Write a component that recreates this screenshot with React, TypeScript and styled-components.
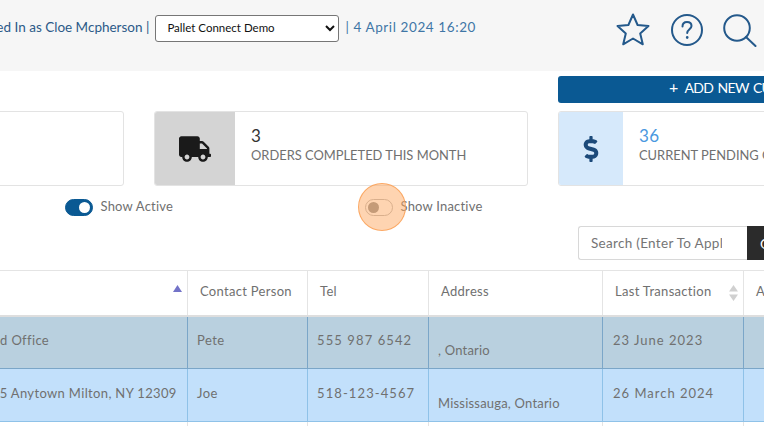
import React from "react";
import styled, { createGlobalStyle } from "styled-components";
import { FaTruck, FaDollarSign } from "react-icons/fa";

const Global = createGlobalStyle`
  html, body { margin: 0; padding: 0; background: #fff; }
  body { font-family: "Lato", "Noto Sans", sans-serif; }
`;

const Page = styled.div`
  position: relative;
  width: 764px;
  height: 426px;
  overflow: hidden;
  background: #fff;
`;

const TopBar = styled.header`
  height: 71px;
  background: #f6f6f6;
  display: flex;
  align-items: flex-start;
  margin-left: -100px;
  white-space: nowrap;
`;

const UserLine = styled.div`
  display: flex;
  align-items: center;
  height: 26px;
  margin-top: 15px;
  width: 716px;
  justify-content: flex-end;
  padding-right: 140px;
  box-sizing: border-box;
  gap: 6px;
  color: #2c5a88;
  font-size: 13.5px;
`;

const UserName = styled.span`
  padding-bottom: 2px;
`;

const Site = styled.select`
  width: 184px;
  height: 27px;
  box-sizing: border-box;
  font-family: "Lato", sans-serif;
  font-size: 11.5px;
  color: #111;
  background: #fff;
  border: 1px solid #767676;
  border-radius: 3px;
  padding: 0 0 2px 7px;
`;

const DateText = styled.span`
  color: #3f76a6;
  letter-spacing: 0.6px;
  padding-bottom: 2px;
`;

const IconSet = styled.div`
  display: flex;
  align-items: flex-start;
  color: #24598b;
`;

const IconSlot = styled.span<{ $w: number; $top: number }>`
  display: block;
  width: ${(p) => p.$w}px;
  margin-top: ${(p) => p.$top}px;
  line-height: 0;
`;

const ActionRow = styled.div`
  display: flex;
  height: 40px;
  padding: 5px 0 0 558px;
  box-sizing: border-box;
`;

const AddButton = styled.button`
  width: 400px;
  flex: none;
  height: 27px;
  padding: 0 0 4px 111px;
  border: 0;
  border-radius: 3px;
  background: #0a5993;
  color: #fff;
  font-family: "Lato", sans-serif;
  font-size: 14px;
  letter-spacing: -0.7px;
  word-spacing: 1.5px;
  text-align: left;
  white-space: nowrap;
`;

const PlusMark = styled.span`
  font-size: 16px;
  line-height: 1;
  margin-right: 3px;
`;

const Cards = styled.section`
  display: flex;
  gap: 30px;
  margin-left: -250px;
  height: 75px;
`;

const Card = styled.article`
  width: 374px;
  flex: none;
  height: 75px;
  box-sizing: border-box;
  display: flex;
  background: #fff;
  border: 1px solid #e3e3e3;
  border-radius: 3px;
  overflow: hidden;
`;

const CardIcon = styled.div<{ $bg: string; $color: string; $w: number }>`
  width: ${(p) => p.$w}px;
  flex: none;
  background: ${(p) => p.$bg};
  color: ${(p) => p.$color};
  display: flex;
  align-items: center;
  justify-content: center;
`;

const CardBody = styled.div`
  padding: 14px 0 0 16px;
  white-space: nowrap;
`;

const CardNumber = styled.div<{ $color: string }>`
  color: ${(p) => p.$color};
  font-size: 17px;
  line-height: 20px;
  letter-spacing: 0.5px;
`;

const CardLabel = styled.div`
  color: #707070;
  font-size: 12.9px;
  line-height: 19px;
`;

const ToggleRow = styled.div`
  display: flex;
  height: 40px;
  align-items: flex-start;
  padding: 13px 0 0 65px;
  box-sizing: border-box;
`;

const ToggleItem = styled.label<{ $w: number }>`
  display: flex;
  align-items: center;
  width: ${(p) => p.$w}px;
  height: 17px;
  gap: 7.5px;
  color: #707070;
  font-size: 13px;
  letter-spacing: 0.2px;
  flex: none;
`;

const ToggleText = styled.span`
  padding-bottom: 3px;
`;

const Track = styled.span<{ $on?: boolean }>`
  position: relative;
  display: block;
  width: 28px;
  height: 17px;
  box-sizing: border-box;
  flex: none;
  border-radius: 9px;
  background: ${(p) => (p.$on ? "#0a5993" : "#fff")};
  border: 1px solid ${(p) => (p.$on ? "#0a5993" : "#b5b5b5")};
`;

const Knob = styled.span<{ $on?: boolean }>`
  position: absolute;
  top: 2px;
  left: ${(p) => (p.$on ? "13px" : "2px")};
  width: 11px;
  height: 11px;
  border-radius: 50%;
  background: ${(p) => (p.$on ? "#fff" : "#8c8c8c")};
`;

const Highlight = styled.span`
  position: absolute;
  left: 358px;
  top: 183px;
  width: 48px;
  height: 48px;
  box-sizing: border-box;
  border-radius: 50%;
  border: 1.5px solid rgba(250, 160, 85, 0.85);
  background: rgba(253, 170, 100, 0.5);
`;

const SearchRow = styled.div`
  display: flex;
  height: 44px;
  padding: 0 0 0 578px;
  box-sizing: border-box;
`;

const SearchInput = styled.input`
  width: 169px;
  height: 34px;
  flex: none;
  box-sizing: border-box;
  padding: 0 25px 0 12px;
  border: 1px solid #d8d8d8;
  border-right: 0;
  border-radius: 3px 0 0 3px;
  font-family: "Lato", sans-serif;
  font-size: 13.5px;
  letter-spacing: 0.3px;
  outline: none;
  &::placeholder { color: #757575; opacity: 1; }
`;

const GoButton = styled.button`
  width: 60px;
  height: 34px;
  flex: none;
  border: 0;
  padding: 0 0 0 13px;
  background: #2b2b2b;
  color: #fff;
  font-family: "Lato", sans-serif;
  font-size: 14px;
  text-align: left;
`;

const Table = styled.table`
  border-collapse: collapse;
  table-layout: fixed;
  width: 822px;
  margin-left: -35px;
  font-size: 13px;
  color: #707070;
`;

const Head = styled.th<{ $w: number }>`
  position: relative;
  width: ${(p) => p.$w}px;
  height: 45px;
  box-sizing: border-box;
  padding: 0 12px 4px;
  text-align: left;
  font-weight: 400;
  background: #fff;
  border: 1px solid #e4e4e4;
  border-bottom: 2px solid #dedede;
  letter-spacing: 0.3px;
  color: #707070;
`;

const SortIcon = styled.svg`
  position: absolute;
  right: 5px;
  top: 14px;
`;

const Row = styled.tr<{ $bg: string; $line: string }>`
  background: ${(p) => p.$bg};
  td { border: 1px solid ${(p) => p.$line}; }
`;

const Cell = styled.td`
  height: 53px;
  box-sizing: border-box;
  padding: 0 9px 5px;
  white-space: nowrap;
  overflow: hidden;
  color: #707070;
  letter-spacing: 0.45px;
`;

const NameCell = styled(Cell)`
  padding-left: 10px;
  padding-right: 0;
  letter-spacing: 0.35px;
`;

const TelCell = styled(Cell)`
  letter-spacing: 1.1px;
`;

const DateCell = styled(Cell)`
  padding-left: 10px;
  letter-spacing: 1px;
`;

const AddressCell = styled(Cell)`
  vertical-align: bottom;
  padding-bottom: 10px;
  letter-spacing: 0.2px;
`;

const columns = [
  { label: "", w: 222, sort: "up" },
  { label: "Contact Person", w: 120 },
  { label: "Tel", w: 121 },
  { label: "Address", w: 174 },
  { label: "Last Transaction", w: 141, sort: "both" },
  { label: "Active", w: 44 },
];

const rows = [
  { name: "Head Office", contact: "Pete", tel: "555 987 6542", address: ", Ontario", date: "23 June 2023", bg: "#b9d0df", line: "#7ba6c8" },
  { name: "1235 Anytown Milton, NY 12309", contact: "Joe", tel: "518-123-4567", address: "Mississauga, Ontario", date: "26 March 2024", bg: "#c2e0fb", line: "#8fc2e8" },
  { name: "", contact: "", tel: "", address: "", date: "", bg: "#fff", line: "#e4e4e4" },
];

export default function App() {
  return (
    <Page>
      <Global />
      <TopBar>
        <UserLine>
          <UserName>Logged In as Cloe Mcpherson |</UserName>
          <Site defaultValue="demo" aria-label="Company">
            <option value="demo">Pallet Connect Demo</option>
          </Site>
          <DateText>| 4 April 2024 16:20</DateText>
        </UserLine>
        <IconSet>
          <IconSlot $w={55} $top={13}>
            <svg width="34" height="33" viewBox="0 0 34 33" fill="none" stroke="currentColor" strokeWidth="2" strokeLinejoin="round">
              <path d="M17 1.5 L21.6 12 L32.5 13 L24.2 20.4 L26.8 31.3 L17 25.5 L7.2 31.3 L9.8 20.4 L1.5 13 L12.4 12 Z" />
            </svg>
          </IconSlot>
          <IconSlot $w={52} $top={14}>
            <svg width="32" height="32" viewBox="0 0 32 32" fill="none" stroke="currentColor" strokeWidth="2" strokeLinecap="round">
              <circle cx="16" cy="16" r="15" />
              <path d="M11.5 12.5 C11.5 9.5 13.5 8 16 8 C18.7 8 20.5 9.7 20.5 12 C20.5 15 16.2 15.5 16.2 19" />
              <path d="M16.2 23.2 V23.6" strokeWidth="2.6" />
            </svg>
          </IconSlot>
          <IconSlot $w={36} $top={14}>
            <svg width="34" height="33" viewBox="0 0 34 33" fill="none" stroke="currentColor" strokeWidth="2" strokeLinecap="round">
              <circle cx="14" cy="14" r="12.8" />
              <path d="M23 23 L32.5 32" />
            </svg>
          </IconSlot>
        </IconSet>
      </TopBar>
      <ActionRow>
        <AddButton><PlusMark>+</PlusMark> ADD NEW CUSTOMER</AddButton>
      </ActionRow>
      <Cards>
        <Card />
        <Card>
          <CardIcon $bg="#d4d4d4" $color="#1a1a1a" $w={80}>
            <FaTruck size={32} />
          </CardIcon>
          <CardBody>
            <CardNumber $color="#333">3</CardNumber>
            <CardLabel>ORDERS COMPLETED THIS MONTH</CardLabel>
          </CardBody>
        </Card>
        <Card>
          <CardIcon $bg="#d6e9fb" $color="#1c4a7a" $w={64}>
            <FaDollarSign size={26} />
          </CardIcon>
          <CardBody>
            <CardNumber $color="#4a98e0">36</CardNumber>
            <CardLabel>CURRENT PENDING ORDERS</CardLabel>
          </CardBody>
        </Card>
      </Cards>
      <ToggleRow>
        <ToggleItem $w={300}>
          <Track $on><Knob $on /></Track>
          <ToggleText>Show Active</ToggleText>
        </ToggleItem>
        <ToggleItem $w={140}>
          <Track><Knob /></Track>
          <ToggleText>Show Inactive</ToggleText>
        </ToggleItem>
      </ToggleRow>
      <Highlight />
      <SearchRow>
        <SearchInput placeholder="Search (Enter To Apply)" />
        <GoButton>Go</GoButton>
      </SearchRow>
      <Table>
        <thead>
          <tr>
            {columns.map((c) => (
              <Head key={c.label || "name"} $w={c.w}>
                {c.label}
                {c.sort === "up" && (
                  <SortIcon width="9" height="8" viewBox="0 0 9 8">
                    <path d="M4.5 0 L9 7 H0 Z" fill="#7373c8" />
                  </SortIcon>
                )}
                {c.sort === "both" && (
                  <SortIcon width="9" height="16" viewBox="0 0 9 16">
                    <path d="M4.5 0 L9 6.5 H0 Z M0 9.5 H9 L4.5 16 Z" fill="#d0d0d0" />
                  </SortIcon>
                )}
              </Head>
            ))}
          </tr>
        </thead>
        <tbody>
          {rows.map((r, i) => (
            <Row key={i} $bg={r.bg} $line={r.line}>
              <NameCell>{r.name}</NameCell>
              <Cell>{r.contact}</Cell>
              <TelCell>{r.tel}</TelCell>
              <AddressCell>{r.address}</AddressCell>
              <DateCell>{r.date}</DateCell>
              <Cell />
            </Row>
          ))}
        </tbody>
      </Table>
    </Page>
  );
}
